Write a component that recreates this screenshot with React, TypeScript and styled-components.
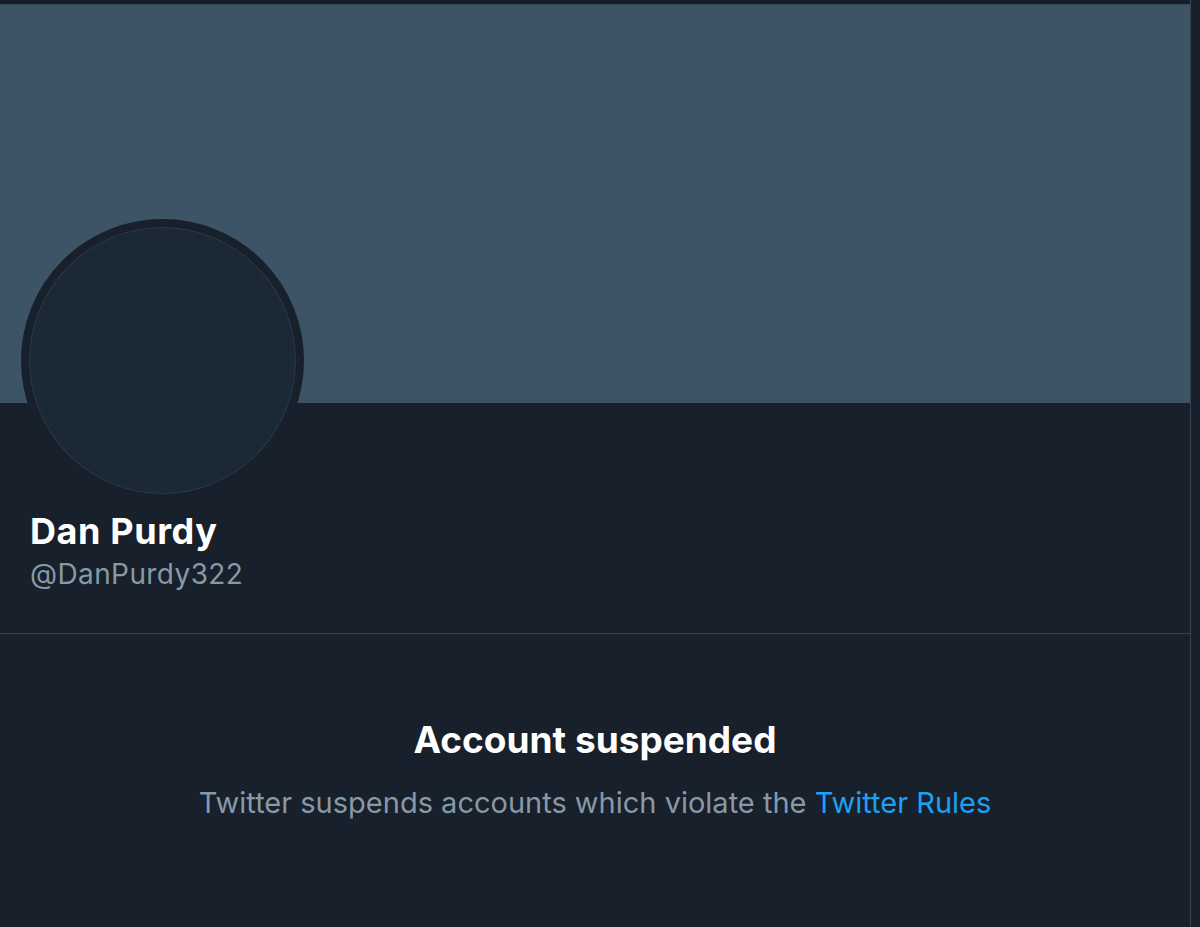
import styled, { createGlobalStyle } from 'styled-components';

const GlobalStyle = createGlobalStyle`
  html, body {
    margin: 0;
    padding: 0;
    background: #17202b;
  }
  body {
    font-family: Inter, "Liberation Sans", sans-serif;
    -webkit-font-smoothing: antialiased;
  }
`;

const Page = styled.div`
  display: flex;
  width: 1200px;
  height: 927px;
  overflow: hidden;
  background: #17202b;
`;

const Column = styled.main`
  width: 1190px;
  flex-shrink: 0;
  border-right: 1px solid #38444d;
  display: flex;
  flex-direction: column;
`;

const TopBar = styled.div`
  height: 4px;
  background: #151d27;
  border-bottom: 1px solid #3a4a58;
`;

const Banner = styled.div`
  height: 398px;
  background: #3d5466;
`;

const Profile = styled.section`
  padding: 0 30px 0;
  height: 230px;
  border-bottom: 1px solid #38444d;
  display: flex;
  flex-direction: column;
`;

const Avatar = styled.div`
  width: 267px;
  height: 267px;
  margin: -184px 0 0 -9px;
  border-radius: 50%;
  border: 8px solid #17202b;
  background: #1b2836;
  box-shadow: inset 0 0 0 1px #2c3b4a;
`;

const Name = styled.h1`
  margin: 7px 0 0;
  font-size: 36px;
  line-height: 44px;
  font-weight: 700;
  color: #ffffff;
  letter-spacing: 0.6px;
`;

const Handle = styled.div`
  margin-top: 3px;
  font-size: 28px;
  line-height: 36px;
  color: #8899a6;
  letter-spacing: 0.4px;
`;

const Notice = styled.section`
  display: flex;
  flex-direction: column;
  align-items: center;
  padding-top: 82px;
`;

const NoticeTitle = styled.h2`
  margin: 0;
  font-size: 37px;
  line-height: 48px;
  font-weight: 700;
  color: #ffffff;
`;

const NoticeText = styled.p`
  margin: 20px 0 0;
  font-size: 29px;
  line-height: 38px;
  color: #8899a6;
`;

const RulesLink = styled.a`
  color: #1da1f2;
  text-decoration: none;
`;

export default function App() {
  return (
    <>
      <GlobalStyle />
      <Page>
        <Column>
          <TopBar />
          <Banner />
          <Profile>
            <Avatar />
            <Name>Dan Purdy</Name>
            <Handle>@DanPurdy322</Handle>
          </Profile>
          <Notice>
            <NoticeTitle>Account suspended</NoticeTitle>
            <NoticeText>
              Twitter suspends accounts which violate the <RulesLink href="#">Twitter Rules</RulesLink>
            </NoticeText>
          </Notice>
        </Column>
      </Page>
    </>
  );
}
